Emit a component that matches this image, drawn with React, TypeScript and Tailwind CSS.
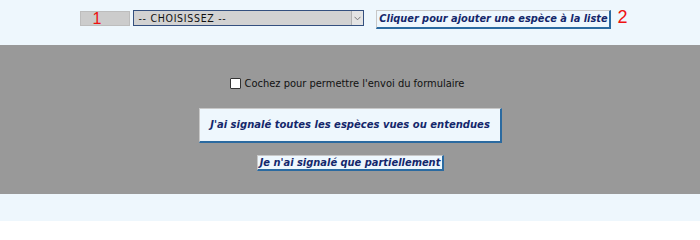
import { useState } from "react"

export default function App() {
  const [checked, setChecked] = useState(false)

  return (
    <div className="w-[700px] h-[221px] bg-[#eef7fd] font-['DejaVu_Sans',Verdana,sans-serif]">
      {/* Species picker row */}
      <div className="h-[45px] flex items-start justify-center pt-[10px] pl-[8px]">
        <div className="mt-[1px] w-[50px] h-[15px] bg-[#cccccc] border border-[#bdbdbd] flex items-center pl-[11px] text-[16px] leading-none text-[#ee1111] font-['Liberation_Sans',Arial,sans-serif]">
          1
        </div>
        <div className="ml-[3px] w-[231px] h-[16px] bg-[#d2d2d2] border border-[#34507f] flex items-center">
          <span className="flex-1 pl-[4px] text-[10.5px] tracking-[0.7px] leading-none text-[#111] font-['DejaVu_Sans_Condensed','DejaVu_Sans',sans-serif] font-stretch-condensed">-- CHOISISSEZ --</span>
          <span className="w-[12px] h-[14px] bg-[#e4e4e4] border-l border-[#b0b0b0] flex items-center justify-center">
            <svg width="7" height="5" viewBox="0 0 7 5" fill="none" stroke="#777" strokeWidth="1">
              <path d="M0.5 0.8 L3.5 3.8 L6.5 0.8" />
            </svg>
          </span>
        </div>
        <button className="ml-[12px] w-[235px] h-[19px] bg-[#eef7fd] border-t border-l border-t-[#c8c8c8] border-l-[#c8c8c8] border-r-2 border-b-2 border-r-[#2b6aa0] border-b-[#2b6aa0] text-[9.8px] font-bold italic text-[#14276b] leading-none whitespace-nowrap">
          Cliquer pour ajouter une espèce à la liste
        </button>
        <span className="ml-[6px] -mt-[2px] text-[18px] leading-none text-[#ee1111] font-['Liberation_Sans',Arial,sans-serif]">2</span>
      </div>

      {/* Submission panel */}
      <div className="h-[149px] bg-[#999999] flex flex-col items-center">
        <label className="mt-[33px] mr-[6px] flex items-center gap-[4px] text-[11px] text-[#111] leading-none font-['DejaVu_Sans_Condensed','DejaVu_Sans',sans-serif] font-stretch-condensed">
          <input
            type="checkbox"
            checked={checked}
            onChange={(e) => setChecked(e.target.checked)}
            className="appearance-none w-[11px] h-[11px] bg-white border border-[#333] rounded-[1px]"
          />
          Cochez pour permettre l'envoi du formulaire
        </label>
        <button className="mt-[19px] ml-[1px] w-[303px] h-[35px] bg-[#eef7fd] border-t border-l border-t-[#c8c8c8] border-l-[#c8c8c8] border-r-2 border-b-2 border-r-[#2b6aa0] border-b-[#2b6aa0] text-[10px] font-bold italic text-[#14276b] leading-none whitespace-nowrap">
          J'ai signalé toutes les espèces vues ou entendues
        </button>
        <button className="mt-[12px] ml-[1px] w-[187px] h-[16px] bg-[#eef7fd] border-t border-l border-t-[#c8c8c8] border-l-[#c8c8c8] border-r-2 border-b-2 border-r-[#2b6aa0] border-b-[#2b6aa0] text-[9.9px] font-bold italic text-[#14276b] leading-none whitespace-nowrap">
          Je n'ai signalé que partiellement
        </button>
      </div>
    </div>
  )
}
